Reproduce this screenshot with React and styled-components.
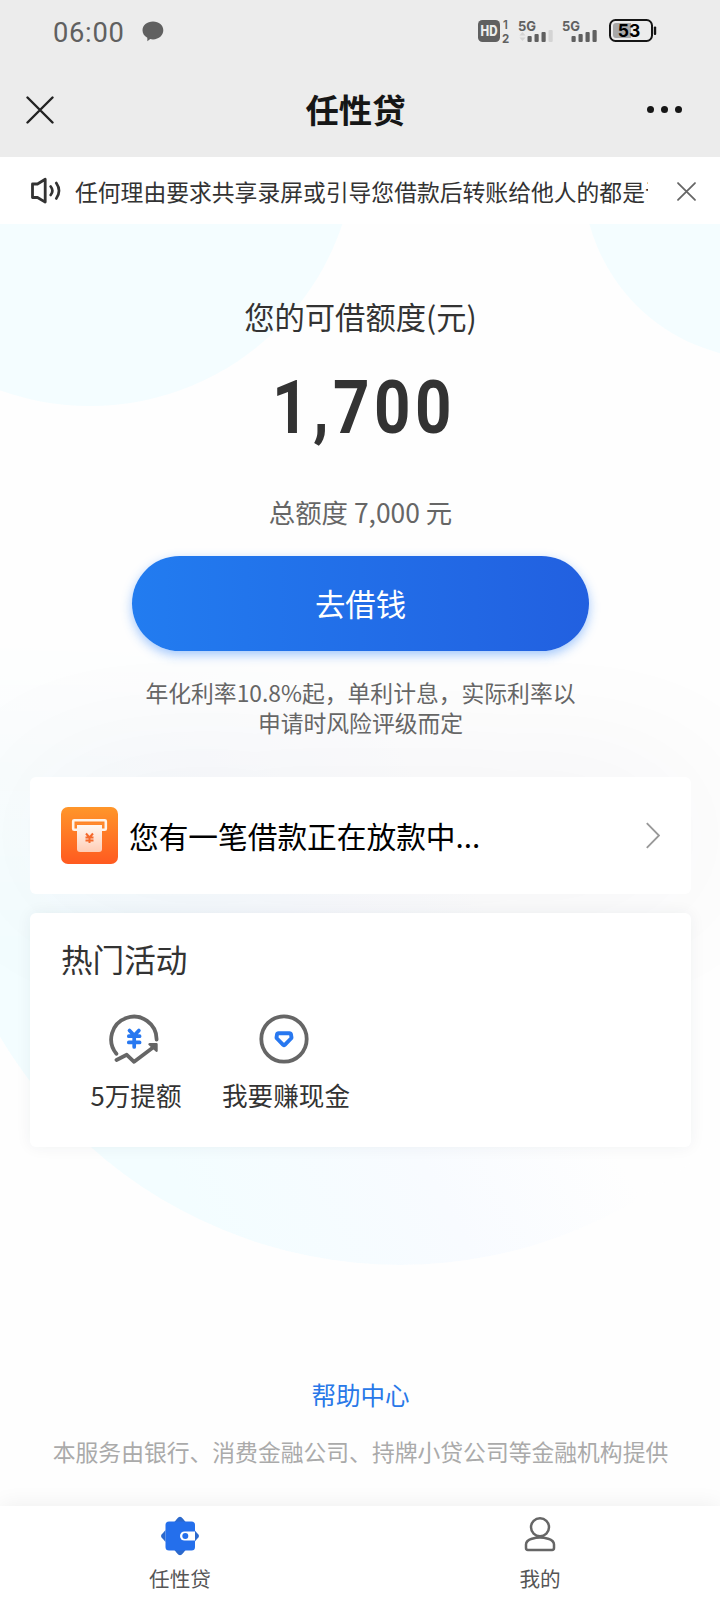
import React, { useState } from "react";
import styled, { createGlobalStyle } from "styled-components";

const GlobalStyle = createGlobalStyle`
  * {
    box-sizing: border-box;
  }
  body {
    margin: 0;
    background: #fefefe;
    font-family: "Noto Sans CJK SC", "Noto Sans", sans-serif;
    color: #333;
  }
  button {
    border: 0;
    padding: 0;
    background: none;
    font-family: inherit;
  }
  svg {
    display: block;
    flex-shrink: 0;
  }
`;

const Page = styled.div`
  width: 720px;
  height: 1600px;
  display: flex;
  flex-direction: column;
  overflow: hidden;
`;

const TopArea = styled.header`
  height: 157px;
  background: #ececec;
`;

const StatusBar = styled.div`
  height: 62px;
  padding: 0 63px 0 53px;
  display: flex;
  align-items: center;
  justify-content: space-between;
`;

const StatusGroup = styled.div`
  display: flex;
  align-items: center;
  gap: ${(props) => props.gap || 0}px;
`;

const Clock = styled.span`
  margin-right: 17px;
  padding-top: 4px;
  font: 400 27.3px/32px Roboto, sans-serif;
  letter-spacing: 0.7px;
  color: #606060;
`;

const TitleBar = styled.div`
  height: 95px;
  padding: 0 38px 0 26px;
  display: grid;
  grid-template-columns: 1fr auto 1fr;
  align-items: center;
`;

const PageTitle = styled.h1`
  margin: 0;
  padding: 0 0 1px 3px;
  font-size: 33.4px;
  line-height: 44px;
  font-weight: 600;
  color: #161616;
`;

const MoreButton = styled.button`
  justify-self: end;
  display: flex;
  gap: 7px;
`;

const Dot = styled.span`
  width: 7px;
  height: 7px;
  border-radius: 50%;
  background: #161616;
`;

const Notice = styled.div`
  height: 67px;
  padding: 2px 24px 0 30px;
  display: flex;
  align-items: center;
  background: #fff;
`;

const NoticeText = styled.div`
  width: 573px;
  margin-left: 13px;
  margin-right: 29px;
  display: flex;
  overflow: hidden;
  white-space: nowrap;
  font-size: 22.8px;
  line-height: 34px;
`;

const Content = styled.main`
  position: relative;
  z-index: 0;
  flex: 1;
  padding: 0 29px 0 30px;
  overflow: hidden;
`;

const Bubble = styled.div`
  position: absolute;
  z-index: -1;
  left: ${(props) => props.x - props.r}px;
  top: ${(props) => props.y - props.r}px;
  width: ${(props) => props.r * 2}px;
  height: ${(props) => props.r * 2}px;
  border-radius: 50%;
  background: #f4fdff;
`;

const FadingBubble = styled(Bubble)`
  background: linear-gradient(62deg, #f3fdff 20%, #f8fbff 38%, #fefefe 52%);
  mask-image: linear-gradient(180deg, transparent 32%, #000 66%);
`;

const Hero = styled.section`
  height: 553px;
  padding-top: 72px;
  display: flex;
  flex-direction: column;
  align-items: center;
`;

const HeroLabel = styled.div`
  font-size: 30.3px;
  line-height: 40px;
`;

const Amount = styled.div`
  margin: 29px 0 0 7px;
  font: 700 74px/86px Roboto, sans-serif;
  letter-spacing: 5.2px;
  transform: scaleX(0.86);
`;

const Total = styled.div`
  margin-top: 42px;
  font-size: 26.4px;
  line-height: 38px;
  color: #666;
`;

const BorrowButton = styled.button`
  width: 457px;
  height: 95px;
  margin-top: 25px;
  padding-bottom: 2px;
  border-radius: 48px;
  background: linear-gradient(90deg, #227cf0, #2260e0);
  box-shadow: 0 4px 11px rgba(34, 124, 250, 0.42);
  color: #fff;
  font-size: 30.4px;
`;

const RateNote = styled.p`
  width: 450px;
  margin: 27px 0 0;
  text-align: center;
  font-size: 22.8px;
  line-height: 30.4px;
  color: #666;
`;

const LoanCard = styled.div`
  height: 117px;
  padding: 0 31px;
  display: flex;
  align-items: center;
  border-radius: 6px;
  background: #fff;
  box-shadow: 0 0 160px rgba(30, 36, 60, 0.06);
  font-size: 29.7px;
  color: #000;

  span {
    flex: 1;
    margin-left: 11px;
    padding-bottom: 1px;
  }
`;

const EventsCard = styled.section`
  height: 234px;
  margin-top: 19px;
  padding: 23px 31px;
  border-radius: 6px;
  background: #fff;
  box-shadow: 0 0 16px rgba(30, 50, 70, 0.06);
`;

const CardTitle = styled.h2`
  margin: 0 0 34px;
  font-size: 31.6px;
  line-height: 44px;
  font-weight: 400;
`;

const EventList = styled.div`
  display: flex;
`;

const EventItem = styled.div`
  width: 150px;
  display: flex;
  flex-direction: column;
  align-items: center;
  font-size: 25.6px;
  line-height: 36px;
  white-space: nowrap;

  svg {
    margin: 0 5px 13px 0;
  }
`;

const Footer = styled.footer`
  margin-top: 229px;
  display: flex;
  flex-direction: column;
  align-items: center;
`;

const HelpLink = styled.a`
  font-size: 24.5px;
  line-height: 38px;
  color: #2878e8;
`;

const Disclaimer = styled.p`
  margin: 19px 0 0;
  white-space: nowrap;
  font-size: 22.8px;
  line-height: 38px;
  color: #aaa;
`;

const TabBar = styled.nav`
  position: relative;
  z-index: 1;
  height: 94px;
  display: flex;
  background: #fff;
  box-shadow: 0 0 22px rgba(0, 0, 0, 0.07);
`;

const Tab = styled.button`
  flex: 1;
  padding-top: 10px;
  display: flex;
  flex-direction: column;
  align-items: center;
  gap: 7px;
  font-size: 20.6px;
  line-height: 30px;
  color: #555;
`;

const ChatIcon = () => (
  <svg width="22" height="21" viewBox="0 0 22 21">
    <path d="M11 .5C17 .5 21.300 4.400 21.300 9.300S17 18.400 11 18.400c-1 0-1.900-.1-2.800-.3L5.400 20.300l-.1-3.500C2.400 15.200.5 12.600.5 9.300.5 4.400 5 .5 11 .5Z" fill="#606060" />
  </svg>
);

const HdIcon = () => (
  <svg width="32" height="28" viewBox="0 -2 32 28">
    <rect x="0" y="1" width="22" height="22" rx="4.500" fill="#606060" />
    <text x="11" y="17.200" textAnchor="middle" textLength="17" lengthAdjust="spacingAndGlyphs" fontFamily="Inter" fontWeight="800" fontSize="14" fill="#ececec">HD</text>
    <text x="27.500" y="9.500" textAnchor="middle" fontFamily="Inter" fontWeight="600" fontSize="11.500" fill="#606060">1</text>
    <text x="27.500" y="23.500" textAnchor="middle" fontFamily="Inter" fontWeight="700" fontSize="11.500" fill="#606060">2</text>
  </svg>
);

const SignalIcon = ({ bars, roaming }) => (
  <svg width="36" height="32" viewBox="0 -4 36 32">
    <text x="0" y="11.700" textLength="18" lengthAdjust="spacingAndGlyphs" fontFamily="Inter" fontWeight="700" fontSize="13.800" fill="#606060">5G</text>
    {roaming && (
      <path d="M1.500 16.500 4.500 13l3 3.500ZM1.500 18.500l3 3.500 3-3.500Z" fill="#d4d4d4" />
    )}
    {[0, 1, 2, 3].map((i) => (
      <rect
        key={i}
        x={9.500 + i * 7}
        y={17 - i * 2}
        width="4.200"
        height={6 + i * 2}
        rx="1"
        fill={i < bars ? "#606060" : "#d4d4d4"}
      />
    ))}
  </svg>
);

const BatteryIcon = ({ level }) => (
  <svg width="48" height="24" viewBox="0 0 48 24">
    <rect x="1" y="1" width="42" height="21" rx="5.500" fill="none" stroke="#161616" strokeWidth="2" />
    <path d="M7 4h15v15H7a3 3 0 0 1-3-3V7a3 3 0 0 1 3-3Z" fill="#a8a8a8" />
    <rect x="44.800" y="7.500" width="2.400" height="8.500" rx="1" fill="#161616" />
    <text x="20" y="17.700" textAnchor="middle" fontFamily="Inter" fontWeight="700" fontSize="17.500" fill="#000">{level}</text>
  </svg>
);

const CloseIcon = ({ size, color, width }) => (
  <svg width={size} height={size} viewBox="0 0 28 28">
    <path d="M1.500 1.500l25 25M26.500 1.500l-25 25" stroke={color} strokeWidth={width} strokeLinecap="round" />
  </svg>
);

const SpeakerIcon = () => (
  <svg width="32" height="30" viewBox="0 0 32 30" fill="none" stroke="#333">
    <path d="M15.200 2.300v22.800L7.500 20.500H2.500V7H7.500Z" strokeWidth="2.800" strokeLinejoin="round" />
    <path d="M20.700 9.500q3.400 4.200 0 8.500M26.300 6q5.400 7.800 0 15.500" strokeWidth="2.700" strokeLinecap="round" />
  </svg>
);

const AtmIcon = () => (
  <svg width="57" height="57" viewBox="0 0 57 57">
    <defs>
      <linearGradient id="atmBg" x1="0" y1="0" x2="0" y2="1">
        <stop offset="0" stopColor="#ff962a" />
        <stop offset="1" stopColor="#ff5a20" />
      </linearGradient>
      <linearGradient id="atmPaper" x1="0" y1="0" x2="0" y2="1">
        <stop offset="0" stopColor="#fff8f2" />
        <stop offset="1" stopColor="#ffcdb5" />
      </linearGradient>
    </defs>
    <rect width="57" height="57" rx="7" fill="url(#atmBg)" />
    <rect x="12.200" y="13.200" width="32.600" height="9.600" rx="1" fill="none" stroke="#fff4ea" strokeWidth="2.600" />
    <path d="M16 18h25v24a3 3 0 0 1-3 3H19a3 3 0 0 1-3-3Z" fill="url(#atmPaper)" />
    <path d="M15 20.500V16.700h27v3.800" fill="none" stroke="#ff8a30" strokeWidth="1.500" />
    <path d="M25 26.500l3.500 4 3.500-4M28.500 30.500v5.500M24.500 30.500h8M24.500 33.500h8" fill="none" stroke="#f56a2c" strokeWidth="2" />
  </svg>
);

const ArrowIcon = () => (
  <svg width="14" height="27" viewBox="0 0 14 27">
    <path d="M.8 1.200 13 13.500.8 25.800" fill="none" stroke="#999" strokeWidth="1.900" />
  </svg>
);

const RaiseIcon = () => (
  <svg width="50" height="50" viewBox="0 0 50 50" fill="none" stroke="#666" strokeWidth="3.800">
    <path d="M7.400 39.800A22.700 22.700 0 1 1 47.600 25.500" strokeLinecap="round" />
    <path d="M7.500 46l10.300-5.200 7.300 7L46 32" strokeLinecap="round" strokeLinejoin="round" />
    <path d="M40.500 30.200h7v6.500Z" fill="#666" strokeWidth="2.400" strokeLinejoin="round" />
    <path d="M20.500 16.500l4.700 5 4.700-5M25.200 21.500V33M19.800 22.200h10.800M19.800 28.400h10.800" stroke="#2878f0" strokeWidth="3.700" strokeLinecap="round" />
  </svg>
);

const DiamondIcon = () => (
  <svg width="50" height="50" viewBox="0 0 50 50" fill="none">
    <circle cx="25" cy="25" r="22.700" stroke="#666" strokeWidth="3.800" />
    <path d="M19.500 19.200q-1.200 0-1.500 1.300l-.5 3q0 .6.500 1l6.200 6.300q.8.700 1.600 0l6.200-6.300q.5-.4.500-1l-.5-3q-.3-1.300-1.500-1.300Z" stroke="#2878f0" strokeWidth="3.900" strokeLinejoin="round" />
  </svg>
);

const WalletIcon = () => (
  <svg width="40" height="40" viewBox="0 0 40 40">
    <path d="M20 .8q1.500 0 3 2l3 3.700H14l3-3.700q1.500-2 3-2ZM20 39.200q-1.500 0-3-2l-3-3.700h12l-3 3.700q-1.500 2-3 2ZM1 20q0-1.500 2-3l2.500-3v12L3 23q-2-1.500-2-3ZM39 20q0-1.500-2-3l-2.500-3v12l2.500-3q2-1.500 2-3Z" fill="#2c69cc" />
    <rect x="5.500" y="5.500" width="29.500" height="29" rx="3.500" fill="#246fec" />
    <path d="M35 15.500H24.500a4.500 4.500 0 0 0 0 9H35Z" fill="#fff" />
    <circle cx="25.300" cy="20" r="3" fill="#246fec" />
  </svg>
);

const UserIcon = () => (
  <svg width="40" height="40" viewBox="0 0 40 40" fill="none" stroke="#666" strokeWidth="2.500">
    <circle cx="20" cy="11.200" r="9" />
    <path d="M6 32v-3.500c0-4 3.500-5 6-5.800 5-1.500 11-1.500 16 0 2.500.8 6 1.800 6 5.800V32q0 1.900-1.900 1.900H7.900Q6 33.900 6 32Z" />
  </svg>
);

const events = [
  { name: "5万提额", icon: <RaiseIcon /> },
  { name: "我要赚现金", icon: <DiamondIcon /> },
];

const App = () => {
  const [showNotice, setShowNotice] = useState(true);

  return (
    <Page>
      <GlobalStyle />
      <TopArea>
        <StatusBar>
          <StatusGroup gap={1}>
            <Clock>06:00</Clock>
            <ChatIcon />
          </StatusGroup>
          <StatusGroup gap={11}>
            <StatusGroup gap={8}>
              <HdIcon />
              <SignalIcon bars={3} roaming />
              <SignalIcon bars={4} />
            </StatusGroup>
            <BatteryIcon level={53} />
          </StatusGroup>
        </StatusBar>
        <TitleBar>
          <CloseIcon size={28} color="#222" width={2.4} />
          <PageTitle>任性贷</PageTitle>
          <MoreButton>
            <Dot />
            <Dot />
            <Dot />
          </MoreButton>
        </TitleBar>
      </TopArea>

      {showNotice ? (
        <Notice>
          <SpeakerIcon />
          <NoticeText>
            <span>任何理由要求共享录屏或引导您借款后转账给他人的都是诈骗</span>
          </NoticeText>
          <button onClick={() => setShowNotice(false)}>
            <CloseIcon size={19} color="#666" width={2.6} />
          </button>
        </Notice>
      ) : null}

      <Content>
        <Bubble x={90} y={-84} r={266} />
        <Bubble x={766} y={-48} r={183} />
        <FadingBubble x={400} y={576} r={465} />
        <Hero>
          <HeroLabel>您的可借额度(元)</HeroLabel>
          <Amount>1,700</Amount>
          <Total>总额度 7,000 元</Total>
          <BorrowButton>去借钱</BorrowButton>
          <RateNote>年化利率10.8%起，单利计息，实际利率以申请时风险评级而定</RateNote>
        </Hero>

        <LoanCard>
          <AtmIcon />
          <span>您有一笔借款正在放款中...</span>
          <ArrowIcon />
        </LoanCard>

        <EventsCard>
          <CardTitle>热门活动</CardTitle>
          <EventList>
            {events.map((item) => (
              <EventItem key={item.name}>
                {item.icon}
                {item.name}
              </EventItem>
            ))}
          </EventList>
        </EventsCard>

        <Footer>
          <HelpLink>帮助中心</HelpLink>
          <Disclaimer>本服务由银行、消费金融公司、持牌小贷公司等金融机构提供</Disclaimer>
        </Footer>
      </Content>

      <TabBar>
        <Tab>
          <WalletIcon />
          任性贷
        </Tab>
        <Tab>
          <UserIcon />
          我的
        </Tab>
      </TabBar>
    </Page>
  );
};

export default App;
